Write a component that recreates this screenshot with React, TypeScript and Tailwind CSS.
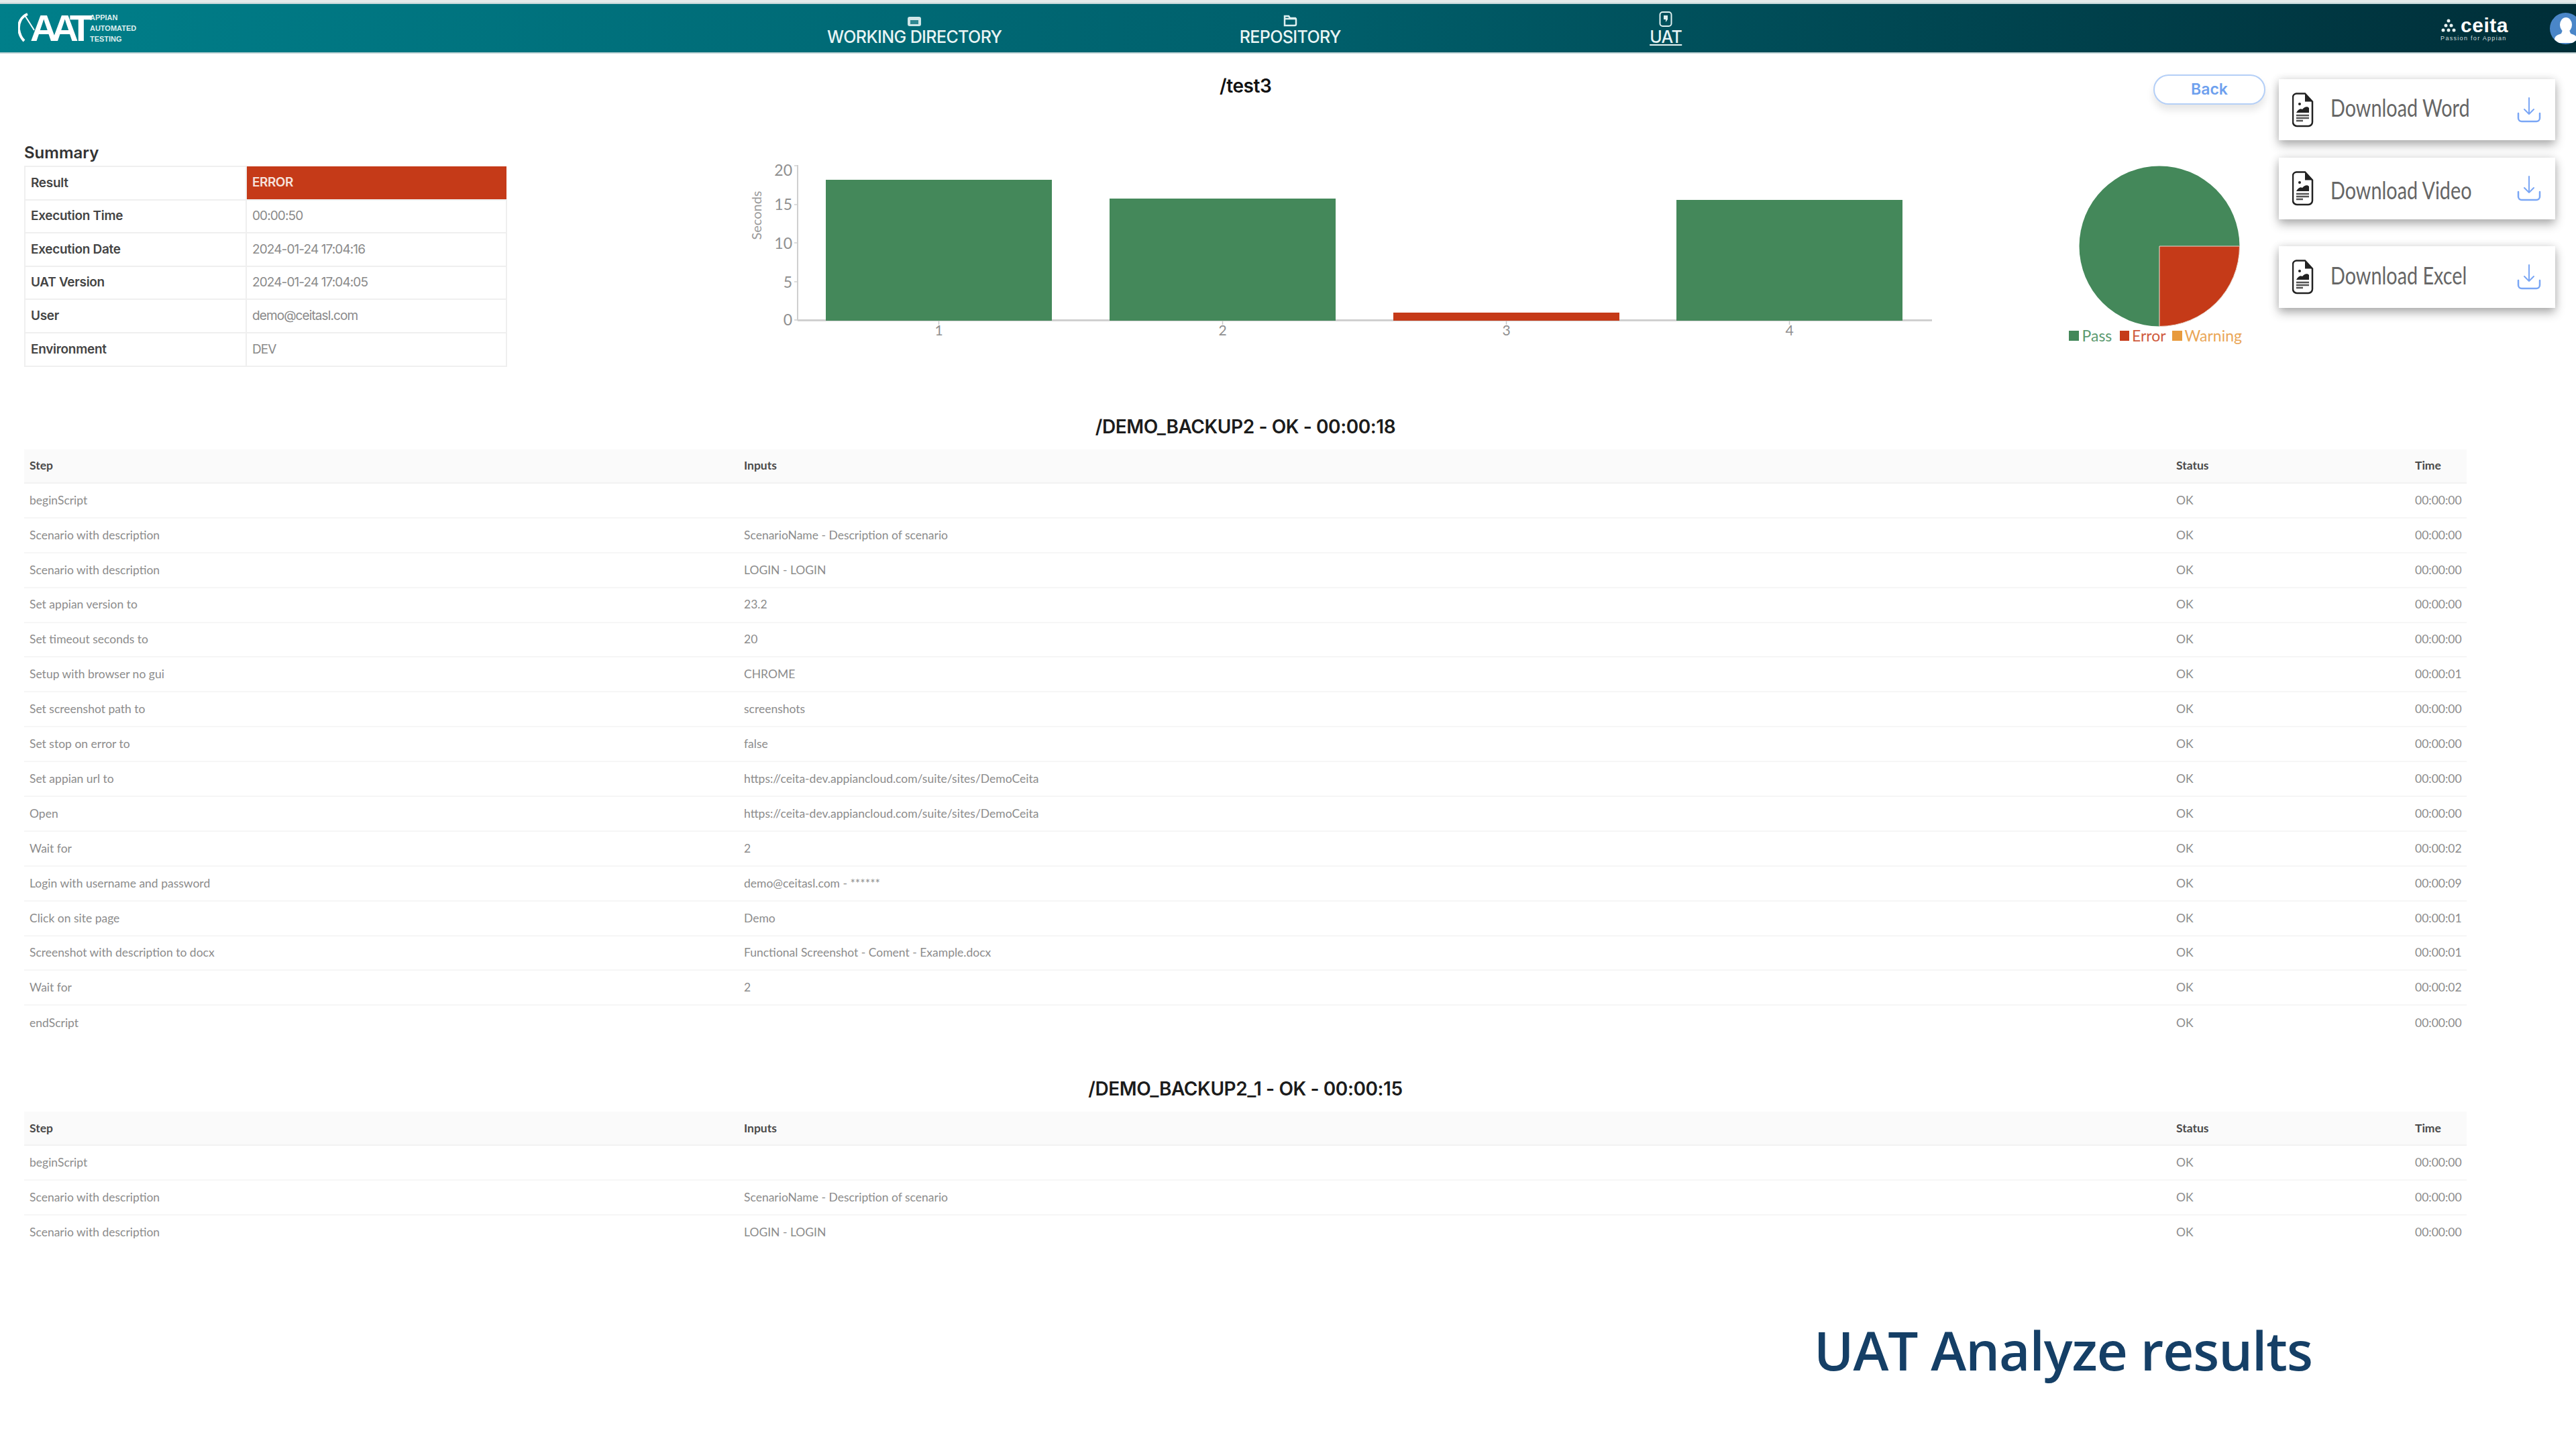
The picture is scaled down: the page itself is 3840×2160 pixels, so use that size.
import { Fragment } from 'react';

const summary = [
  ['Execution Time', '00:00:50'],
  ['Execution Date', '2024-01-24 17:04:16'],
  ['UAT Version', '2024-01-24 17:04:05'],
  ['User', 'demo@ceitasl.com'],
  ['Environment', 'DEV'],
];

const url = 'https://ceita-dev.appiancloud.com/suite/sites/DemoCeita';

const steps = [
  ['beginScript', '', '00:00:00'],
  ['Scenario with description', 'ScenarioName - Description of scenario', '00:00:00'],
  ['Scenario with description', 'LOGIN - LOGIN', '00:00:00'],
  ['Set appian version to', '23.2', '00:00:00'],
  ['Set timeout seconds to', '20', '00:00:00'],
  ['Setup with browser no gui', 'CHROME', '00:00:01'],
  ['Set screenshot path to', 'screenshots', '00:00:00'],
  ['Set stop on error to', 'false', '00:00:00'],
  ['Set appian url to', url, '00:00:00'],
  ['Open', url, '00:00:00'],
  ['Wait for', '2', '00:00:02'],
  ['Login with username and password', 'demo@ceitasl.com - ******', '00:00:09'],
  ['Click on site page', 'Demo', '00:00:01'],
  ['Screenshot with description to docx', 'Functional Screenshot - Coment - Example.docx', '00:00:01'],
  ['Wait for', '2', '00:00:02'],
  ['endScript', '', '00:00:00'],
];

const yTicks = [
  { label: '20', y: 247, ty: 254 },
  { label: '15', y: 305, ty: 305 },
  { label: '10', y: 362, ty: 363 },
  { label: '5', y: 420, ty: 421 },
  { label: '0', y: 477, ty: 477 },
];

const bars = [
  { x: 1231, top: 268, color: '#44885a', label: '1' },
  { x: 1654, top: 296, color: '#44885a', label: '2' },
  { x: 2077, top: 466, color: '#c53a18', label: '3' },
  { x: 2499, top: 298, color: '#44885a', label: '4' },
];

function FileIcon() {
  return (
    <svg width="32" height="52" viewBox="0 0 32 52" fill="none" className="shrink-0">
      <path d="M6 1.500h13l11 12V44a6 6 0 0 1-6 6H7a6 6 0 0 1-6-6V7a5.500 5.500 0 0 1 5-5.500z" fill="#fff" stroke="#222" strokeWidth="2.500" />
      <path d="M19 1.500V13.500H30z" fill="#222" />
      <circle cx="11" cy="17" r="2" fill="#222" />
      <path d="M6 30c3-5 6-7 9-5 3-4 8-5 10-2v7z" fill="#222" />
      <path d="M6 34h19M6 38h19M6 42h10" stroke="#555" strokeWidth="2.500" />
    </svg>
  );
}

function DownloadIcon() {
  return (
    <svg width="36" height="38" viewBox="0 0 36 38" fill="none" stroke="#7aa6f5" strokeWidth="2" strokeLinecap="round" strokeLinejoin="round" className="shrink-0">
      <path d="M18 1v24M11 18l7 7 7-7" />
      <path d="M2 24v7a5 5 0 0 0 5 5h22a5 5 0 0 0 5-5v-7" strokeWidth="2.500" />
    </svg>
  );
}

function DownloadCard({ label, className, textClass }: { label: string; className: string; textClass: string }) {
  return (
    <div className={`flex items-center w-[412px] bg-white pl-[20px] pr-[21px] shadow-[0_7px_14px_rgba(0,0,0,0.3),0_0_12px_rgba(0,0,0,0.1)] ${className}`}>
      <FileIcon />
      <div className="ml-[25px] flex-1">
        <p className={`origin-left scale-x-[0.8] font-['Lato',sans-serif] text-[36px] text-[#666666] whitespace-nowrap ${textClass}`}>{label}</p>
      </div>
      <DownloadIcon />
    </div>
  );
}

function Logo() {
  return (
    <div className="flex items-center ml-[27px]">
      <svg width="36" height="46" viewBox="0 0 36 46" fill="none" stroke="#fff" className="-mr-[18px]">
        <path d="M14 2C4 6 0 16 1 25c1 7 4 13 8 17" strokeWidth="4" />
        <path d="M10 4l14 22" strokeWidth="2" />
      </svg>
      <span className="font-['Liberation_Sans',sans-serif] font-bold text-[56px] leading-none tracking-[-9px] text-white">AAT</span>
      <div className="ml-[5px] flex flex-col font-['Liberation_Sans',sans-serif] font-bold text-[11px] leading-[16px] text-[#dfeeee]">
        <span>APPIAN</span>
        <span>AUTOMATED</span>
        <span>TESTING</span>
      </div>
    </div>
  );
}

function NavItem({ label, active, children }: { label: string; active?: boolean; children: React.ReactNode }) {
  return (
    <div className="flex flex-col items-center w-[560px]">
      <div className="flex items-end h-[24px] mt-[2px]">{children}</div>
      <span className={`font-['Inter',sans-serif] font-medium text-[25px] leading-[30px] tracking-[-0.6px] text-[#e8f4f4] ${active ? 'underline underline-offset-2' : ''}`}>{label}</span>
    </div>
  );
}

function StepsTable({ title, rows }: { title: string; rows: string[][] }) {
  return (
    <section>
      <h2 className="w-[3713px] h-[40px] text-center font-['Inter',sans-serif] font-semibold text-[28px] leading-[40px] text-[#1c1c1c] tracking-[-0.4px]">{title}</h2>
      <table className="ml-[36px] mt-[14px] w-[3641px] table-fixed border-collapse font-['Lato',sans-serif] text-[17.500px]">
        <colgroup>
          <col className="w-[1065px]" />
          <col className="w-[2135px]" />
          <col className="w-[356px]" />
          <col className="w-[85px]" />
        </colgroup>
        <thead>
          <tr className="h-[50px] bg-[#fafafa] border-b-2 border-[#f2f2f2] text-left text-[#4a4a4a]">
            {['Step', 'Inputs', 'Status', 'Time'].map((h) => (
              <th key={h} className="pl-[8px] font-bold">{h}</th>
            ))}
          </tr>
        </thead>
        <tbody className="text-[#8c8c8c]">
          {rows.map((r, i) => (
            <tr key={i} className="h-[51.900px] border-b-2 border-[#f6f6f6] last:border-b-0">
              <td className="pl-[8px]">{r[0]}</td>
              <td className="pl-[8px]">{r[1]}</td>
              <td className="pl-[8px]">OK</td>
              <td className="pl-[8px]">{r[2]}</td>
            </tr>
          ))}
        </tbody>
      </table>
    </section>
  );
}

export default function App() {
  return (
    <div className="w-[3840px] h-[2160px] overflow-hidden bg-white font-['Inter',sans-serif]">
      <div className="h-[4px] bg-[#e4eaea]" />
      {/* Header */}
      <header className="flex items-center h-[76px] overflow-hidden bg-gradient-to-r from-[#007f8a] via-[#00606c] to-[#002e38] border-y-2 border-[#c5d6d8]">
        <Logo />
        <nav className="flex ml-[880px]">
          <NavItem label="WORKING DIRECTORY">
            <svg width="20" height="14" viewBox="0 0 20 14" className="mb-[1px]">
              <rect width="20" height="14" rx="3" fill="#cfe6e8" />
              <rect x="4" y="5" width="12" height="6" fill="#2f8791" />
            </svg>
          </NavItem>
          <NavItem label="REPOSITORY">
            <svg width="22" height="19" viewBox="0 0 22 19" fill="none" stroke="#dff0f0" strokeWidth="2.500">
              <path d="M3 17V3h6l2 3h8a2 2 0 0 1 1 2v7a2 2 0 0 1-2 2z" />
              <path d="M2 7h18" />
            </svg>
          </NavItem>
          <NavItem label="UAT" active>
            <svg width="20" height="23" viewBox="0 0 20 23" fill="none">
              <rect x="1.500" y="1" width="17" height="21" rx="4" stroke="#dff0f0" strokeWidth="2" />
              <path d="M7 6h6v6l-3 4v-4H7z" fill="#dff0f0" />
            </svg>
          </NavItem>
        </nav>
        <div className="ml-auto flex items-center">
          <div className="flex flex-col items-start mt-[6px]">
            <div className="flex items-center gap-[6px]">
              <svg width="24" height="20" viewBox="0 0 24 20" fill="#e8f2f2">
                <circle cx="12" cy="3" r="2.500" />
                <circle cx="8" cy="10" r="2.500" />
                <circle cx="16" cy="10" r="2.500" />
                <circle cx="4" cy="17" r="2.500" />
                <circle cx="12" cy="17" r="2.500" />
                <circle cx="20" cy="17" r="2.500" />
              </svg>
              <span className="font-['Liberation_Sans',sans-serif] font-bold text-[30px] leading-[24px] tracking-[0.5px] text-white">ceita</span>
            </div>
            <span className="font-['Liberation_Sans',sans-serif] text-[9px] leading-[14px] tracking-[1.300px] text-[#d0dcdc]">Passion for Appian</span>
          </div>
          <div className="flex items-center justify-center shrink-0 w-[47px] h-[47px] ml-[62px] -mr-[8px] rounded-full bg-[#4a86c8] overflow-hidden">
            <svg width="38" height="40" viewBox="0 0 38 40" fill="#fff" className="mt-[4px]">
              <ellipse cx="19" cy="13" rx="9" ry="11" />
              <path d="M14 21h10l2 5c5 2 9 3 10 8v6H2v-6c1-5 5-6 10-8z" />
            </svg>
          </div>
        </div>
      </header>

      {/* Top section */}
      <div className="flex h-[536px]">
        <div className="w-[3397px] pl-[36px]">
          <div className="flex items-center h-[45px] mt-[31px] pr-[20px]">
            <h1 className="ml-[1782px] pb-[12px] font-['Inter',sans-serif] font-semibold text-[28px] text-[#111111] tracking-[-0.4px]">/test3</h1>
            <button className="ml-auto w-[167px] h-[45px] rounded-full border-2 border-[#b4cff7] bg-white shadow-[0_8px_12px_rgba(0,0,0,0.1)] font-['Inter',sans-serif] font-semibold text-[23px] text-[#6ea0ee]">Back</button>
          </div>
          <div className="flex items-start mt-[56px]">
            <div className="w-[720px] shrink-0">
              <h3 className="h-[35px] font-['Inter',sans-serif] font-semibold text-[24px] leading-[32px] text-[#333333]">Summary</h3>
              <table className="w-[720px] table-fixed border-collapse font-['Inter',sans-serif] text-[19px]">
                <tbody>
                  <tr className="h-[49.600px]">
                    <td className="w-[330px] pl-[8px] border-2 border-[#efefef] font-semibold tracking-[-0.3px] text-[#444444]">Result</td>
                    <td className="pl-[8px] bg-[#c53a18] font-semibold tracking-[-0.5px] text-[#f6e2dc]">ERROR</td>
                  </tr>
                  {summary.map(([k, v]) => (
                    <Fragment key={k}>
                      <tr className="h-[49.600px]">
                        <td className="pl-[8px] border-2 border-[#efefef] font-semibold tracking-[-0.3px] text-[#444444]">{k}</td>
                        <td className="pl-[8px] border-2 border-[#efefef] tracking-[-0.9px] text-[#8a8a8a]">{v}</td>
                      </tr>
                    </Fragment>
                  ))}
                </tbody>
              </table>
            </div>

            {/* Duration chart */}
            <svg width="1800" height="300" viewBox="1100 212 1800 300" className="ml-[344px] shrink-0 font-['Lato',sans-serif]">
              <text transform="translate(1135 321) rotate(-90)" textAnchor="middle" fontSize="20" fill="#9a9a9a">Seconds</text>
              {yTicks.map((t) => (
                <g key={t.label}>
                  <text x="1181" y={t.ty + 8} textAnchor="end" fontSize="23" fill="#8f8f8f">{t.label}</text>
                  <line x1="1184" x2="1189" y1={t.y} y2={t.y} stroke="#d0d0d0" strokeWidth="1.500" />
                </g>
              ))}
              <line x1="1189" x2="1189" y1="246" y2="478" stroke="#cfcfcf" strokeWidth="2" />
              <line x1="1189" x2="2880" y1="477.500" y2="477.500" stroke="#d0d0d0" strokeWidth="3" />
              {bars.map((b) => (
                <g key={b.label}>
                  <rect x={b.x} y={b.top} width="337" height={478 - b.top} fill={b.color} />
                  <line x1={b.x + 168.500} x2={b.x + 168.500} y1="478" y2="484" stroke="#c8c8c8" strokeWidth="1.500" />
                  <text x={b.x + 168.500} y="500" textAnchor="middle" fontSize="21" fill="#8f8f8f">{b.label}</text>
                </g>
              ))}
            </svg>

            {/* Pass / error pie */}
            <div className="ml-[184px] w-[258px] shrink-0 pt-[35px]">
              <svg width="240" height="240" viewBox="0 0 240 240" className="ml-[15px]">
                <circle cx="120" cy="120" r="119.500" fill="#44885a" />
                <path d="M120 120h119.500A119.500 119.500 0 0 1 120 239.500z" fill="#c53a18" stroke="#f0d9d0" strokeWidth="1" />
              </svg>
              <div className="flex items-center mt-[2px] font-['Lato',sans-serif] text-[23px] leading-[22px] whitespace-nowrap">
                <span className="w-[15px] h-[15px] bg-[#44885a]" />
                <span className="ml-[5px] w-[41px] text-[#5c9a70]">Pass</span>
                <span className="ml-[15px] w-[15px] h-[15px] bg-[#c53a18]" />
                <span className="ml-[4px] w-[46px] text-[#cf5a3d]">Error</span>
                <span className="ml-[14px] w-[15px] h-[15px] bg-[#e89a3c]" />
                <span className="ml-[4px] text-[#eaa657]">Warning</span>
              </div>
            </div>
          </div>
        </div>

        {/* Download actions */}
        <div className="flex flex-col pt-[38px]">
          <DownloadCard label="Download Word" className="h-[91px]" textClass="pb-[8px]" />
          <DownloadCard label="Download Video" className="h-[92px] mt-[26px]" textClass="pt-[4px]" />
          <DownloadCard label="Download Excel" className="h-[92px] mt-[40px]" textClass="pb-[6px]" />
        </div>
      </div>

      <StepsTable title="/DEMO_BACKUP2 - OK - 00:00:18" rows={steps} />
      <div className="mt-[53px]">
        <StepsTable title="/DEMO_BACKUP2_1 - OK - 00:00:15" rows={steps.slice(0, 3)} />
      </div>

      <p className="mt-[101px] ml-[2704px] font-['Open_Sans',sans-serif] font-semibold text-[80px] leading-[96px] tracking-[-1px] text-[#153f66] whitespace-nowrap">UAT Analyze results</p>
    </div>
  );
}
